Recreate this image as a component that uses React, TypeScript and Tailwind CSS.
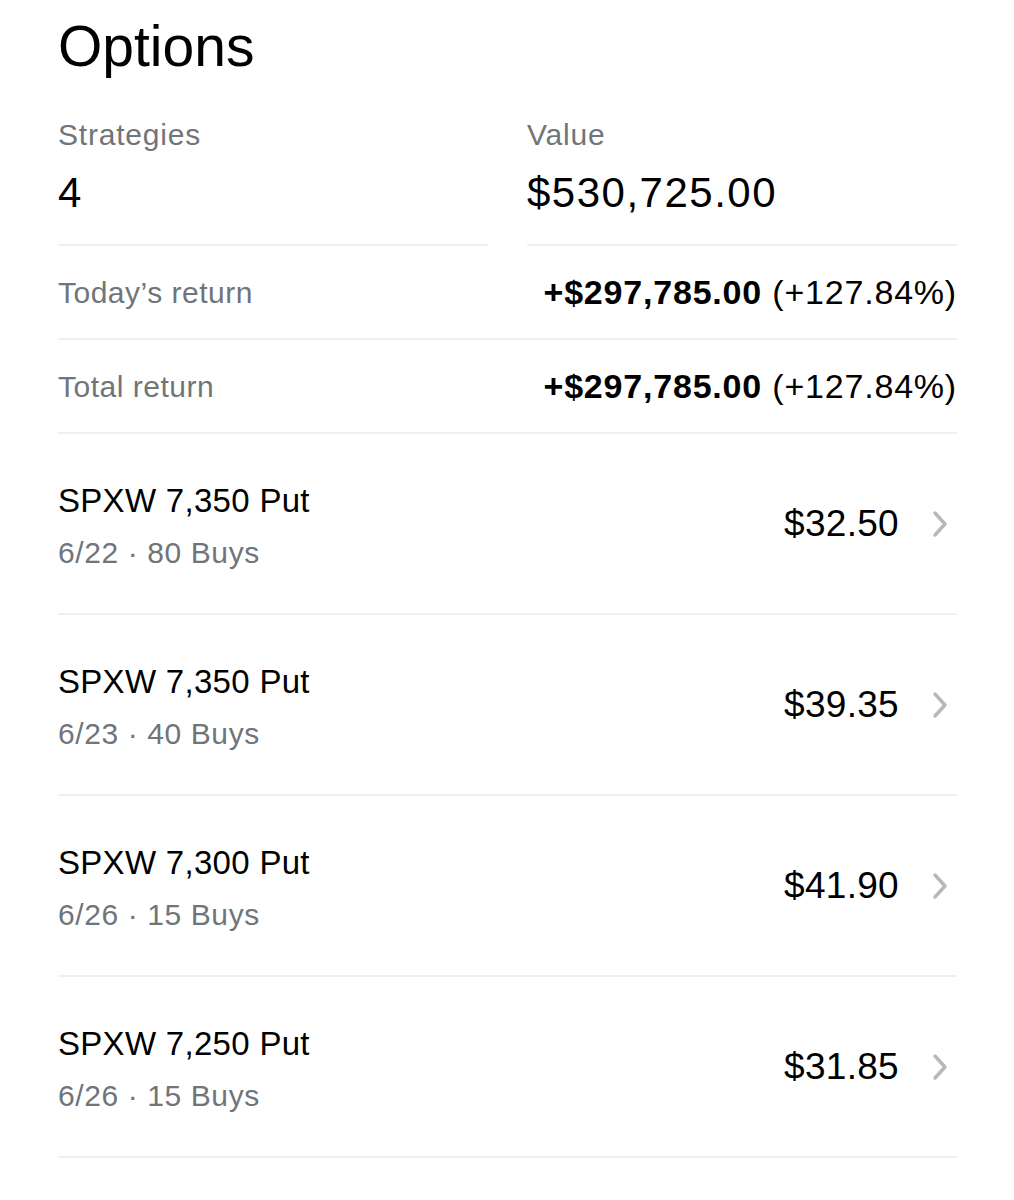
import React from 'react';

type Position = {
  name: string;
  detail: string;
  price: string;
};

const positions: Position[] = [
  { name: 'SPXW 7,350 Put', detail: '6/22 · 80 Buys', price: '$32.50' },
  { name: 'SPXW 7,350 Put', detail: '6/23 · 40 Buys', price: '$39.35' },
  { name: 'SPXW 7,300 Put', detail: '6/26 · 15 Buys', price: '$41.90' },
  { name: 'SPXW 7,250 Put', detail: '6/26 · 15 Buys', price: '$31.85' },
];

const returns = [
  { label: 'Today’s return', amount: '+$297,785.00', pct: '(+127.84%)' },
  { label: 'Total return', amount: '+$297,785.00', pct: '(+127.84%)' },
];

const Chevron = () => (
  <svg width="18" height="28" viewBox="0 0 18 28" fill="none" className="shrink-0">
    <path d="M4 3 L14 14 L4 25" stroke="#b5b9bd" strokeWidth="3.5" strokeLinecap="round" strokeLinejoin="round" />
  </svg>
);

const PositionRow: React.FC<{ item: Position }> = ({ item }) => (
  <div className="flex h-[181px] items-center justify-between border-b-2 border-[#eef0f2]">
    <div className="flex flex-col pt-[7px]">
      <span className="text-[33px] leading-[40px] tracking-[0.3px] text-black">{item.name}</span>
      <span className="mt-[12px] text-[30px] leading-[40px] tracking-[0.6px] text-[#6f757b]">{item.detail}</span>
    </div>
    <div className="flex items-center gap-[32px] pr-[8px]">
      <span className="text-[37px] leading-[44px] tracking-[0.3px] text-black">{item.price}</span>
      <Chevron />
    </div>
  </div>
);

export default function App() {
  return (
    <div className="min-h-[1200px] w-[1014px] bg-white pl-[58px] pr-[57px] font-['Liberation_Sans',Arial,sans-serif]">
      <h1 className="pt-[14px] text-[57px] leading-[64px] text-black">Options</h1>

      <div className="mt-[39px] grid grid-cols-2 gap-[39px]">
        <div className="flex flex-col border-b-2 border-[#eef0f2] pb-[27px]">
          <span className="text-[30px] leading-[36px] tracking-[0.8px] text-[#6f757b]">Strategies</span>
          <span className="mt-[16px] text-[42px] leading-[48px] tracking-[1.5px] text-black">4</span>
        </div>
        <div className="flex flex-col border-b-2 border-[#eef0f2] pb-[27px]">
          <span className="text-[30px] leading-[36px] tracking-[0.8px] text-[#6f757b]">Value</span>
          <span className="mt-[16px] text-[42px] leading-[48px] tracking-[1.5px] text-black">$530,725.00</span>
        </div>
      </div>

      {returns.map((r) => (
        <div key={r.label} className="flex h-[94px] items-center justify-between border-b-2 border-[#eef0f2]">
          <span className="text-[30px] tracking-[0.5px] text-[#6f757b]">{r.label}</span>
          <span className="text-[34px] tracking-[0.8px] text-black">
            <span className="font-bold">{r.amount}</span> {r.pct}
          </span>
        </div>
      ))}

      {positions.map((p, i) => (
        <PositionRow key={i} item={p} />
      ))}
    </div>
  );
}
